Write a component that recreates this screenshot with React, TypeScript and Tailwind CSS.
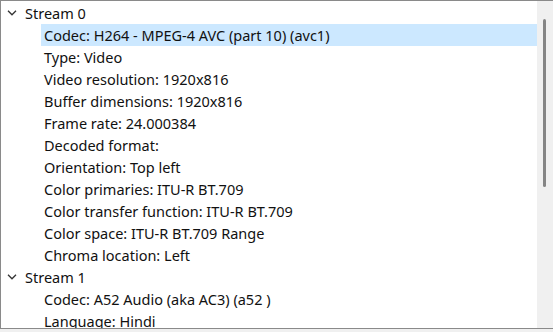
import React from "react";

type Node = { label: string; children: string[] };

const streams: Node[] = [
  {
    label: "Stream 0",
    children: [
      "Codec: H264 - MPEG-4 AVC (part 10) (avc1)",
      "Type: Video",
      "Video resolution: 1920x816",
      "Buffer dimensions: 1920x816",
      "Frame rate: 24.000384",
      "Decoded format:",
      "Orientation: Top left",
      "Color primaries: ITU-R BT.709",
      "Color transfer function: ITU-R BT.709",
      "Color space: ITU-R BT.709 Range",
      "Chroma location: Left",
    ],
  },
  {
    label: "Stream 1",
    children: ["Codec: A52 Audio (aka AC3) (a52 )", "Language: Hindi"],
  },
];

function Chevron() {
  return (
    <svg width="10" height="6" viewBox="0 0 10 6" className="shrink-0">
      <path d="M1 0.8 L5 4.8 L9 0.8" fill="none" stroke="#333" strokeWidth="1.3" />
    </svg>
  );
}

export default function App() {
  return (
    <div
      className="w-[553px] h-[332px] bg-[#f0f0f0] overflow-hidden"
      style={{ fontFamily: '"Noto Sans", "Open Sans", sans-serif' }}
    >
      <div className="h-[329px] flex bg-white border-t border-l border-b border-[#8a8a8a]">
        <div className="flex-1 overflow-hidden pt-px text-[14.5px] text-[#111]">
          {streams.map((s, si) => (
            <div key={s.label}>
              <div className="h-[22px] flex items-center pl-[6px]">
                <Chevron />
                <span className="ml-[8px] leading-none">{s.label}</span>
              </div>
              {s.children.map((c, ci) => (
                <div
                  key={c}
                  className={`h-[22px] flex items-center ml-[40px] pl-[3px] ${
                    si === 0 && ci === 0 ? "bg-[#cce8ff]" : ""
                  }`}
                >
                  <span className="leading-none whitespace-nowrap">{c}</span>
                </div>
              ))}
            </div>
          ))}
        </div>
        <div className="w-[16px] bg-[#f0f0f0] pt-[18px] pl-[6px]">
          <div className="w-[3px] h-[168px] bg-[#858585] rounded-full" />
        </div>
      </div>
    </div>
  );
}
